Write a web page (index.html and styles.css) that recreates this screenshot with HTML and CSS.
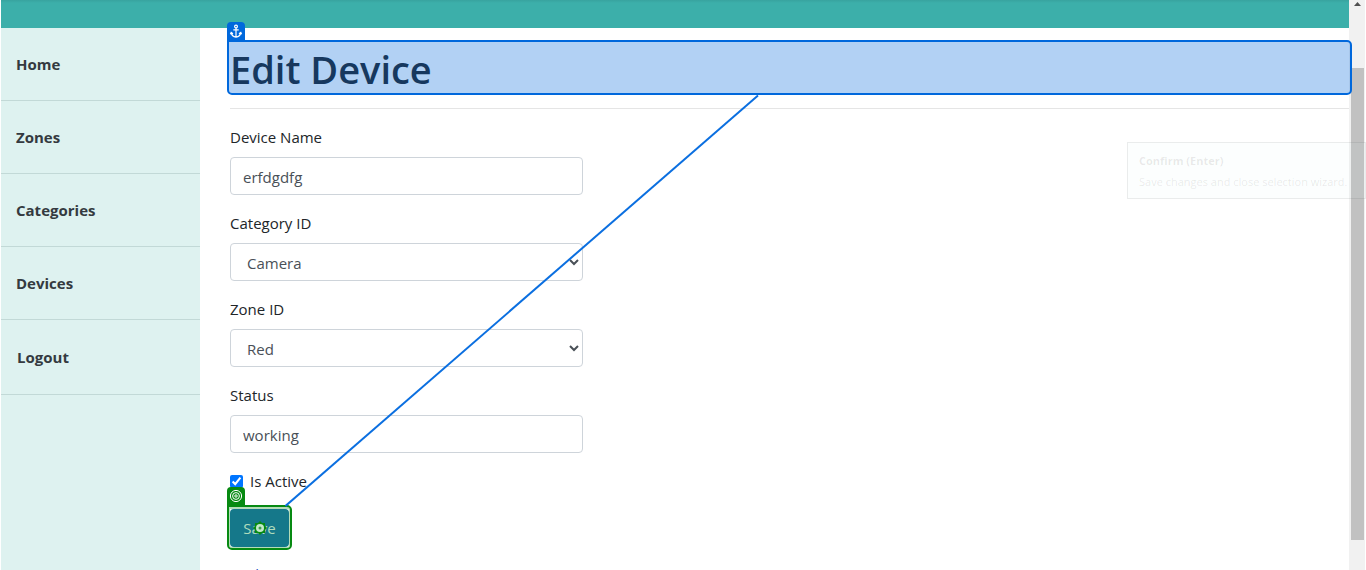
FILE: index.html
```html
<!DOCTYPE html>
<html lang="en">
<head>
<meta charset="utf-8">
<meta name="viewport" content="width=device-width, initial-scale=1">
<title>Edit Device</title>
<link rel="stylesheet" href="styles.css">
</head>
<body>
<div class="screen">
  <div class="page">
    <header class="topbar"></header>
    <div class="body">
      <nav class="sidebar">
        <a class="nav-item" href="#">Home</a>
        <a class="nav-item" href="#">Zones</a>
        <a class="nav-item" href="#">Categories</a>
        <a class="nav-item" href="#">Devices</a>
        <button class="nav-item nav-logout" type="button">Logout</button>
      </nav>
      <main class="content">
        <div class="target">
          <h1 class="title">Edit Device</h1>
          <div class="mark mark-anchor">
            <span class="tag tag-anchor">
              <svg width="18" height="18" viewBox="0 0 18 18" fill="none" stroke="#fff" stroke-width="1.2"><circle cx="9" cy="4.5" r="1.4"/><path d="M9 5.9V15M6.3 7.8H11.7M4.3 10.6C4.6 13.3 6.5 14.9 9 15.1C11.5 14.9 13.4 13.3 13.7 10.6M3.4 12.2L4.2 10.4L6 11.7M14.6 12.2L13.8 10.4L12 11.7"/></svg>
            </span>
          </div>
        </div>
        <hr class="rule">
        <form class="form">
          <div class="field">
            <label for="name">Device Name</label>
            <input class="control" id="name" type="text" value="erfdgdfg">
          </div>
          <div class="field">
            <label for="category">Category ID</label>
            <select class="control" id="category"><option>Camera</option></select>
          </div>
          <div class="field">
            <label for="zone">Zone ID</label>
            <select class="control" id="zone"><option>Red</option></select>
          </div>
          <div class="field">
            <label for="status">Status</label>
            <input class="control" id="status" type="text" value="working">
          </div>
          <div class="check">
            <input id="active" type="checkbox" checked>
            <label for="active">Is Active</label>
          </div>
          <div class="target target-save">
            <button class="save" type="button">Save</button>
            <div class="mark mark-save">
              <span class="tag tag-save">
                <svg width="18" height="18" viewBox="0 0 18 18" fill="none" stroke="#fff"><circle cx="9" cy="9" r="5.6"/><circle cx="9" cy="9" r="3.4"/><circle cx="9" cy="9" r="1.2"/></svg>
              </span>
              <svg class="dot" width="14" height="14" viewBox="0 0 14 14"><path d="M7 0L9 2H12V5L14 7L12 9V12H9L7 14L5 12H2V9L0 7L2 5V2H5Z" fill="#078a12"/><circle cx="7" cy="7" r="4" fill="#c4e8ca"/><circle cx="7" cy="7" r="1.5" fill="#3f9f4c"/></svg>
            </div>
          </div>
        </form>
        <a class="back" href="#">Back to List</a>
      </main>
    </div>
  </div>
  <div class="scrollbar">
    <svg class="arrow" width="16" height="8" viewBox="0 0 16 8"><path d="M5 6L8.5 2L12 6Z" fill="#505050"/></svg>
    <div class="thumb"></div>
  </div>
  <svg class="connector" width="474" height="412" viewBox="0 0 474 412"><path d="M473 0.5L0.5 411" stroke="#0b6fe0" stroke-width="2"/></svg>
  <div class="tooltip"><strong>Confirm (Enter)</strong><span>Save changes and close selection wizard.</span></div>
</div>
</body>
</html>
```
FILE: styles.css
```css
* { box-sizing: border-box; }
body {
  margin: 0;
  background: #fff;
  color: #212529;
  font: 15px/24px "Open Sans", "Noto Sans", sans-serif;
}
.screen {
  position: relative;
  display: flex;
  height: 100vh;
  padding: 0 1px;
  overflow: hidden;
}
.page { flex: 1; min-width: 0; }
.topbar {
  height: 28px;
  background: linear-gradient(#38a39f, #3cafaa 3px);
}
.body { display: flex; min-height: 100vh; }
.sidebar {
  display: flex;
  flex-direction: column;
  flex: 0 0 199px;
  background: #def2f0;
}
.nav-item {
  padding: 24px 15px;
  border: 0;
  border-bottom: 1px solid #c2d9d7;
  background: none;
  color: #343a40;
  font: inherit;
  font-weight: 700;
  text-align: left;
  text-decoration: none;
}
.nav-logout { padding: 25px 16px; }
.content { flex: 1; min-width: 0; padding: 16px 0 0 30px; }
.target { position: relative; }
.title {
  margin: 0;
  padding-top: 2px;
  font-size: 38px;
  line-height: 46px;
  font-weight: 600;
}
.mark { position: absolute; border-radius: 5px; }
.mark-anchor {
  inset: -4px -3px -3px -3px;
  border: 2px solid #0068dc;
  border-top-left-radius: 0;
  background: rgba(0, 104, 220, 0.3);
}
.tag {
  position: absolute;
  left: -2px;
  bottom: 100%;
  width: 18px;
  height: 20px;
  border-radius: 4px 4px 0 0;
}
.tag svg { display: block; }
.tag-anchor { background: #0068dc; }
.tag-save { background: #078a12; }
.rule { margin: 16px 0; border: 0; border-top: 1px solid #e5e5e5; }
.field { margin-bottom: 16px; }
.field label { display: block; margin-bottom: 8px; }
.control {
  display: block;
  width: 353px;
  max-width: 100%;
  height: 38px;
  padding: 7px 12px 5px;
  border: 1px solid #ced4da;
  border-radius: 4px;
  background: #fff;
  color: #495057;
  font: inherit;
}
.check { display: flex; align-items: center; gap: 7px; margin-bottom: 16px; }
.check input { width: 13px; height: 13px; margin: 0; accent-color: #0075ff; }
.target-save { width: 59px; margin-bottom: 15px; }
.save {
  display: block;
  width: 100%;
  height: 38px;
  padding: 0;
  border: 0;
  border-radius: 4px;
  background: #15788a;
  color: #b0dcbc;
  font: inherit;
}
.mark-save {
  inset: -4px -3px -3px -3px;
  border: 2px solid #078a12;
  border-top-left-radius: 0;
  box-shadow: inset 0 0 0 1px #b4dcb8, inset 0 2px 0 #b4dcb8;
}
.dot { position: absolute; left: 50%; top: 50%; margin: -7px; }
.back { color: #2453c0; text-decoration: none; }
.scrollbar { flex: 0 0 16px; min-width: 0; padding: 0 1px 0 2px; background: #f1f1f1; }
.arrow { display: block; margin-left: -2px; }
.thumb { height: 472px; margin-top: 60px; background: #c1c1c1; }
.connector { position: absolute; left: 285px; top: 95px; }
.tooltip {
  position: absolute;
  right: 0;
  top: 142px;
  display: flex;
  flex-direction: column;
  width: 239px;
  padding: 7px 11px 6px;
  border: 1px solid rgba(0, 0, 0, 0.07);
  background: rgba(190, 240, 230, 0.05);
  color: rgba(50, 30, 40, 0.1);
  font-size: 11px;
  line-height: 21px;
  white-space: nowrap;
}
```
